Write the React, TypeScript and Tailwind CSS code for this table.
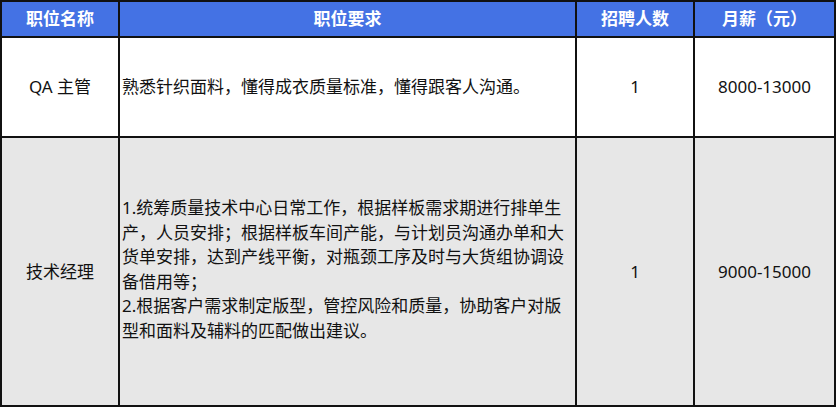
import React from 'react';

const FONT = '"Noto Sans", "Noto Sans CJK SC", sans-serif';

const headers = ['职位名称', '职位要求', '招聘人数', '月薪（元）'];

const rows = [
  {
    title: 'QA 主管',
    lines: ['熟悉针织面料，懂得成衣质量标准，懂得跟客人沟通。'],
    count: '1',
    pay: '8000-13000',
    bg: 'bg-white',
    h: 'h-[100px]',
    shift: '',
  },
  {
    title: '技术经理',
    lines: [
      '1.统筹质量技术中心日常工作，根据样板需求期进行排单生',
      '产，人员安排；根据样板车间产能，与计划员沟通办单和大',
      '货单安排，达到产线平衡，对瓶颈工序及时与大货组协调设',
      '备借用等；',
      '2.根据客户需求制定版型，管控风险和质量，协助客户对版',
      '型和面料及辅料的匹配做出建议。',
    ],
    count: '1',
    pay: '9000-15000',
    bg: 'bg-[#e7e7e7]',
    h: 'h-[269px]',
    shift: '-mt-[4px]',
  },
];

const cell = 'border-r-2 border-b-2 border-[#111] flex items-center';

export default function App() {
  return (
    <div className="w-[837px] h-[407px] bg-white overflow-hidden" style={{ fontFamily: FONT }}>
      <div className="w-[836px] border-l-2 border-t-2 border-[#111] grid grid-cols-[118px_457px_118px_141px] text-[17px] text-[#111]">
        {headers.map((h) => (
          <div key={h} className={`${cell} justify-center h-[36px] bg-[#4472e4] text-white font-bold`}>
            {h}
          </div>
        ))}
        {rows.map((r) => (
          <React.Fragment key={r.title}>
            <div className={`${cell} ${r.bg} ${r.h} justify-center`}>{r.title}</div>
            <div className={`${cell} ${r.bg} ${r.h} px-[2px]`}>
              <div className={`leading-[24.5px] whitespace-nowrap ${r.shift}`}>
                {r.lines.map((l) => (
                  <div key={l}>{l}</div>
                ))}
              </div>
            </div>
            <div className={`${cell} ${r.bg} ${r.h} justify-center`}>{r.count}</div>
            <div className={`${cell} ${r.bg} ${r.h} justify-center`}>{r.pay}</div>
          </React.Fragment>
        ))}
      </div>
    </div>
  );
}
